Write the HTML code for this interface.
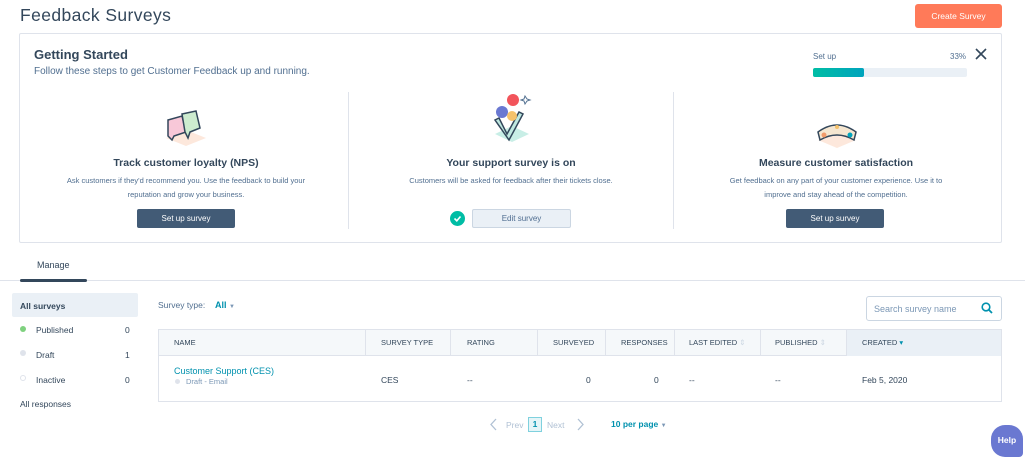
<!DOCTYPE html>
<html><head><meta charset="utf-8"><style>
*{box-sizing:border-box;margin:0;padding:0}
body{width:1025px;height:457px;overflow:hidden;background:#fff;font-family:"Liberation Sans",sans-serif;color:#33475b;position:relative}
.a{position:absolute}
.t{white-space:nowrap}
.btn{position:absolute;background:#425b76;color:#fff;font-size:8px;text-align:center;line-height:19px;border-radius:2px;width:98px;height:19px}
.col{position:absolute;width:320px;text-align:center}
.col h3{font-size:10.5px;font-weight:bold;color:#33475b}
.col p{font-size:7.5px;color:#516f90;line-height:14px;margin-top:5px}
.hd{position:absolute;top:338px;font-size:7.5px;color:#33475b}
.bd{position:absolute;top:375px;font-size:8.5px;color:#33475b}
.vl{position:absolute;top:329px;height:27px;width:1px;background:#dfe3eb}
</style></head><body>
<div class="a t" style="left:20px;top:5px;font-size:17.5px;color:#33475b;letter-spacing:0.4px">Feedback Surveys</div>
<div class="a" style="left:915px;top:4px;width:87px;height:24px;background:#ff7a59;border-radius:3px;color:#fff;font-size:8.5px;text-align:center;line-height:24px">Create Survey</div>

<div class="a" style="left:19px;top:33px;width:983px;height:210px;border:1px solid #dfe3eb;border-radius:2px"></div>
<div class="a t" style="left:34px;top:47px;font-size:13px;font-weight:bold">Getting Started</div>
<div class="a t" style="left:34px;top:66px;font-size:10px;color:#516f90">Follow these steps to get Customer Feedback up and running.</div>
<div class="a t" style="left:813px;top:52px;font-size:8px;color:#516f90">Set up</div>
<div class="a t" style="left:950px;top:52px;font-size:8px;color:#516f90">33%</div>
<svg class="a" style="left:975px;top:48px" width="12" height="12"><path d="M1 1L11 11M11 1L1 11" stroke="#33475b" stroke-width="1.6"/></svg>
<div class="a" style="left:813px;top:68px;width:154px;height:9px;background:#eaf0f6;border-radius:2px"></div>
<div class="a" style="left:813px;top:68px;width:51px;height:9px;background:linear-gradient(90deg,#00bda5,#00a4bd);border-radius:2px"></div>
<div class="a" style="left:348px;top:92px;width:1px;height:137px;background:#dfe3eb"></div>
<div class="a" style="left:673px;top:92px;width:1px;height:137px;background:#dfe3eb"></div>

<svg class="a" style="left:160px;top:108px" width="52" height="40"><path d="M6 30L26 22L46 30L26 38Z" fill="#fde8dc"/><path d="M8 12L22 8L26 24L14 28L12 32L8 28Z" fill="#f8c8d8" stroke="#33475b" stroke-width="1.5"/><path d="M22 6L36 3L40 20L30 24L28 30L25 24Z" fill="#cdeccf" stroke="#33475b" stroke-width="1.5"/></svg>
<svg class="a" style="left:485px;top:92px" width="52" height="54"><path d="M10 42L27 34L44 42L27 50Z" fill="#c8eee6"/><path d="M14 26L22 42L34 20L38 22L24 48L10 28Z" fill="#bfe8e0" stroke="#33475b" stroke-width="1.5"/><circle cx="28" cy="8" r="6" fill="#f2545b"/><circle cx="17" cy="20" r="6" fill="#6a78d1"/><circle cx="27" cy="24" r="5" fill="#f5c26b"/><path d="M40 4l2 3 3 1-3 1-2 3-1-3-3-1 3-1z" fill="none" stroke="#516f90"/></svg>
<svg class="a" style="left:812px;top:118px" width="50" height="32"><path d="M6 22L25 14L44 22L25 30Z" fill="#fde8dc"/><path d="M6 14Q25 0 44 14L42 22Q25 12 8 22Z" fill="#f5e6d0" stroke="#33475b" stroke-width="1.5"/><circle cx="12" cy="17" r="2.5" fill="#f29b6b"/><circle cx="38" cy="17" r="2.5" fill="#00a4bd"/><circle cx="25" cy="9" r="2" fill="#f5c26b"/></svg>

<div class="col" style="left:26px;top:157px"><h3>Track customer loyalty (NPS)</h3><p>Ask customers if they'd recommend you. Use the feedback to build your<br>reputation and grow your business.</p></div>
<div class="btn" style="left:137px;top:209px">Set up survey</div>
<div class="col" style="left:351px;top:157px"><h3>Your support survey is on</h3><p>Customers will be asked for feedback after their tickets close.</p></div>
<div class="a" style="left:450px;top:211px;width:15px;height:15px;border-radius:50%;background:#00bda5"></div>
<svg class="a" style="left:450px;top:211px" width="15" height="15"><path d="M4.5 7.5L6.8 9.8L10.5 5.5" stroke="#fff" stroke-width="1.6" fill="none"/></svg>
<div class="a" style="left:472px;top:209px;width:99px;height:19px;background:#eaf0f6;border:1px solid #cbd6e2;border-radius:2px;font-size:8px;color:#506e91;text-align:center;line-height:17px">Edit survey</div>
<div class="col" style="left:676px;top:157px"><h3>Measure customer satisfaction</h3><p>Get feedback on any part of your customer experience. Use it to<br>improve and stay ahead of the competition.</p></div>
<div class="btn" style="left:786px;top:209px">Set up survey</div>

<div class="a t" style="left:37px;top:260px;font-size:9px">Manage</div>
<div class="a" style="left:0;top:280px;width:1025px;height:1px;background:#dfe3eb"></div>
<div class="a" style="left:20px;top:279px;width:67px;height:3px;background:#33475b;border-radius:2px"></div>

<div class="a" style="left:12px;top:293px;width:126px;height:24px;background:#eaf0f6;border-radius:2px"></div>
<div class="a t" style="left:20px;top:301px;font-size:8.5px;font-weight:bold">All surveys</div>
<div class="a" style="left:20px;top:326px;width:6px;height:6px;border-radius:50%;background:#7fd17f"></div>
<div class="a t" style="left:36px;top:325px;font-size:8.5px">Published</div><div class="a t" style="left:125px;top:325px;font-size:8.5px">0</div>
<div class="a" style="left:20px;top:350px;width:6px;height:6px;border-radius:50%;background:#dfe3eb"></div>
<div class="a t" style="left:36px;top:350px;font-size:8.5px">Draft</div><div class="a t" style="left:125px;top:350px;font-size:8.5px">1</div>
<div class="a" style="left:20px;top:375px;width:6px;height:6px;border-radius:50%;border:1px solid #dfe3eb"></div>
<div class="a t" style="left:36px;top:375px;font-size:8.5px">Inactive</div><div class="a t" style="left:125px;top:375px;font-size:8.5px">0</div>
<div class="a t" style="left:20px;top:399px;font-size:8.5px">All responses</div>

<div class="a t" style="left:158px;top:300px;font-size:8.5px;color:#516f90">Survey type:</div>
<div class="a t" style="left:215px;top:300px;font-size:9px;font-weight:bold;color:#0091ae">All <span style="font-size:6px;color:#7c98b6">▼</span></div>
<div class="a" style="left:866px;top:296px;width:136px;height:25px;border:1px solid #cbd6e2;border-radius:3px"></div>
<div class="a t" style="left:874px;top:304px;font-size:9px;color:#7c98b6">Search survey name</div>
<svg class="a" style="left:981px;top:302px" width="12" height="12"><circle cx="5" cy="5" r="3.8" stroke="#0091ae" stroke-width="1.6" fill="none"/><path d="M8 8L11 11" stroke="#0091ae" stroke-width="1.8"/></svg>

<div class="a" style="left:158px;top:329px;width:844px;height:73px;border:1px solid #dfe3eb"></div>
<div class="a" style="left:159px;top:330px;width:842px;height:26px;background:#f5f8fa;border-bottom:1px solid #dfe3eb"></div>
<div class="a" style="left:846px;top:330px;width:155px;height:26px;background:#eaf0f6"></div>
<div class="vl" style="left:365px"></div><div class="vl" style="left:450px"></div><div class="vl" style="left:537px"></div><div class="vl" style="left:605px"></div><div class="vl" style="left:674px"></div><div class="vl" style="left:760px"></div><div class="vl" style="left:846px"></div>
<div class="hd t" style="left:174px">NAME</div>
<div class="hd t" style="left:381px">SURVEY TYPE</div>
<div class="hd t" style="left:467px">RATING</div>
<div class="hd t" style="left:553px">SURVEYED</div>
<div class="hd t" style="left:621px">RESPONSES</div>
<div class="hd t" style="left:689px">LAST EDITED <span style="color:#cbd6e2">⇕</span></div>
<div class="hd t" style="left:775px">PUBLISHED <span style="color:#cbd6e2">⇕</span></div>
<div class="hd t" style="left:862px">CREATED <span style="color:#0091ae">▾</span></div>
<div class="a t" style="left:174px;top:366px;font-size:9px;color:#0091ae">Customer Support (CES)</div>
<div class="a" style="left:175px;top:379px;width:5px;height:5px;border-radius:50%;background:#dfe3eb"></div>
<div class="a t" style="left:186px;top:377px;font-size:7.5px;color:#7c98b6">Draft - Email</div>
<div class="bd t" style="left:381px">CES</div>
<div class="bd t" style="left:467px">--</div>
<div class="bd t" style="left:586px">0</div>
<div class="bd t" style="left:654px">0</div>
<div class="bd t" style="left:689px">--</div>
<div class="bd t" style="left:775px">--</div>
<div class="bd t" style="left:862px">Feb 5, 2020</div>

<svg class="a" style="left:489px;top:418px" width="8" height="13"><path d="M7 1L2 6.5L7 12" stroke="#b0c1d4" stroke-width="1.3" fill="none"/></svg>
<div class="a t" style="left:506px;top:420px;font-size:8.5px;color:#b0c1d4">Prev</div>
<div class="a" style="left:528px;top:417px;width:14px;height:15px;border:1px solid #7fd1de;background:#e5f5f8;font-size:8.5px;color:#0091ae;text-align:center;line-height:13px;font-weight:bold">1</div>
<div class="a t" style="left:547px;top:420px;font-size:8.5px;color:#b0c1d4">Next</div>
<svg class="a" style="left:577px;top:418px" width="8" height="13"><path d="M1 1L6 6.5L1 12" stroke="#b0c1d4" stroke-width="1.3" fill="none"/></svg>
<div class="a t" style="left:611px;top:419px;font-size:8.5px;font-weight:bold;color:#0091ae">10 per page <span style="font-size:6px;color:#7c98b6">▼</span></div>
<div class="a" style="left:991px;top:425px;width:32px;height:32px;border-radius:14px 14px 4px 14px;background:#6a78d1;color:#fff;font-size:8.5px;font-weight:bold;text-align:center;line-height:30px">Help</div>
</body></html>
